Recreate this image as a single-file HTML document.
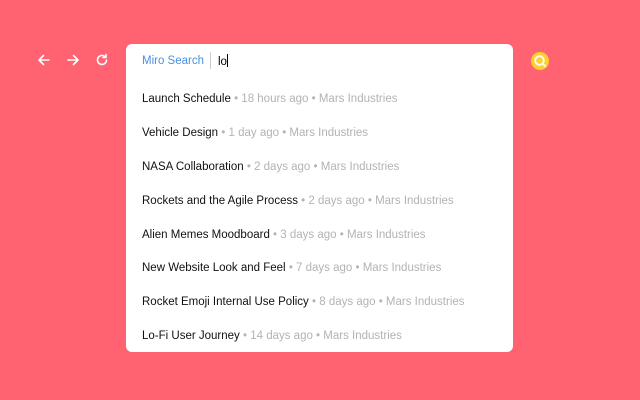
<!DOCTYPE html>
<html><head><style>
body{margin:0;width:640px;height:400px;background:#ff6372;font-family:"Liberation Sans",sans-serif;position:relative;overflow:hidden}
.card{position:absolute;left:126px;top:44px;width:387px;height:308px;background:#fff;border-radius:6px}
.hdr{position:absolute;left:16px;top:10px;font-size:11.5px;line-height:14px;color:#4a90e2}
.sep{position:absolute;left:84px;top:8px;width:1px;height:17px;background:#ccc}
.inp{position:absolute;left:92px;top:10px;font-size:11.5px;line-height:14px;color:#000}
.cur{display:inline-block;width:1px;height:13px;background:#000;vertical-align:-2px}
.row{position:absolute;left:16px;font-size:11.5px;line-height:14px;color:#111;white-space:nowrap}
.row span{color:#b3b3b3}
svg{position:absolute}
</style></head><body>
<svg style="left:37px;top:53px" width="14" height="14" viewBox="0 0 14 14" fill="none" stroke="#fff" stroke-width="1.6" stroke-linecap="round" stroke-linejoin="round"><path d="M12 7H2M6.5 2.5L2 7l4.5 4.5"/></svg>
<svg style="left:66px;top:53px" width="14" height="14" viewBox="0 0 14 14" fill="none" stroke="#fff" stroke-width="1.6" stroke-linecap="round" stroke-linejoin="round"><path d="M2 7h10M7.5 2.5L12 7l-4.5 4.5"/></svg>
<svg style="left:95px;top:53px" width="14" height="14" viewBox="0 0 14 14" fill="none" stroke="#fff" stroke-width="1.6" stroke-linecap="round" stroke-linejoin="round"><path d="M11.5 7A4.5 4.5 0 1 1 10 3.6"/><path d="M11 1.5v3h-3"/></svg>
<svg style="left:530px;top:51px" width="20" height="20" viewBox="0 0 20 20"><circle cx="10" cy="10" r="9" fill="#ffd02f"/><circle cx="9.5" cy="9.5" r="4.3" fill="none" stroke="#fff" stroke-width="1.8"/><path d="M12.5 12.5L15 15" stroke="#fff" stroke-width="1.8" stroke-linecap="round"/></svg>
<div class="card">
<div class="hdr">Miro Search</div><div class="sep"></div><div class="inp">lo<span class="cur"></span></div>
<div class="row" style="top:48px">Launch Schedule <span>• 18 hours ago • Mars Industries</span></div>
<div class="row" style="top:82px">Vehicle Design <span>• 1 day ago • Mars Industries</span></div>
<div class="row" style="top:116px">NASA Collaboration <span>• 2 days ago • Mars Industries</span></div>
<div class="row" style="top:150px">Rockets and the Agile Process <span>• 2 days ago • Mars Industries</span></div>
<div class="row" style="top:184px">Alien Memes Moodboard <span>• 3 days ago • Mars Industries</span></div>
<div class="row" style="top:217px">New Website Look and Feel <span>• 7 days ago • Mars Industries</span></div>
<div class="row" style="top:251px">Rocket Emoji Internal Use Policy <span>• 8 days ago • Mars Industries</span></div>
<div class="row" style="top:285px">Lo-Fi User Journey <span>• 14 days ago • Mars Industries</span></div>
</div>
</body></html>
